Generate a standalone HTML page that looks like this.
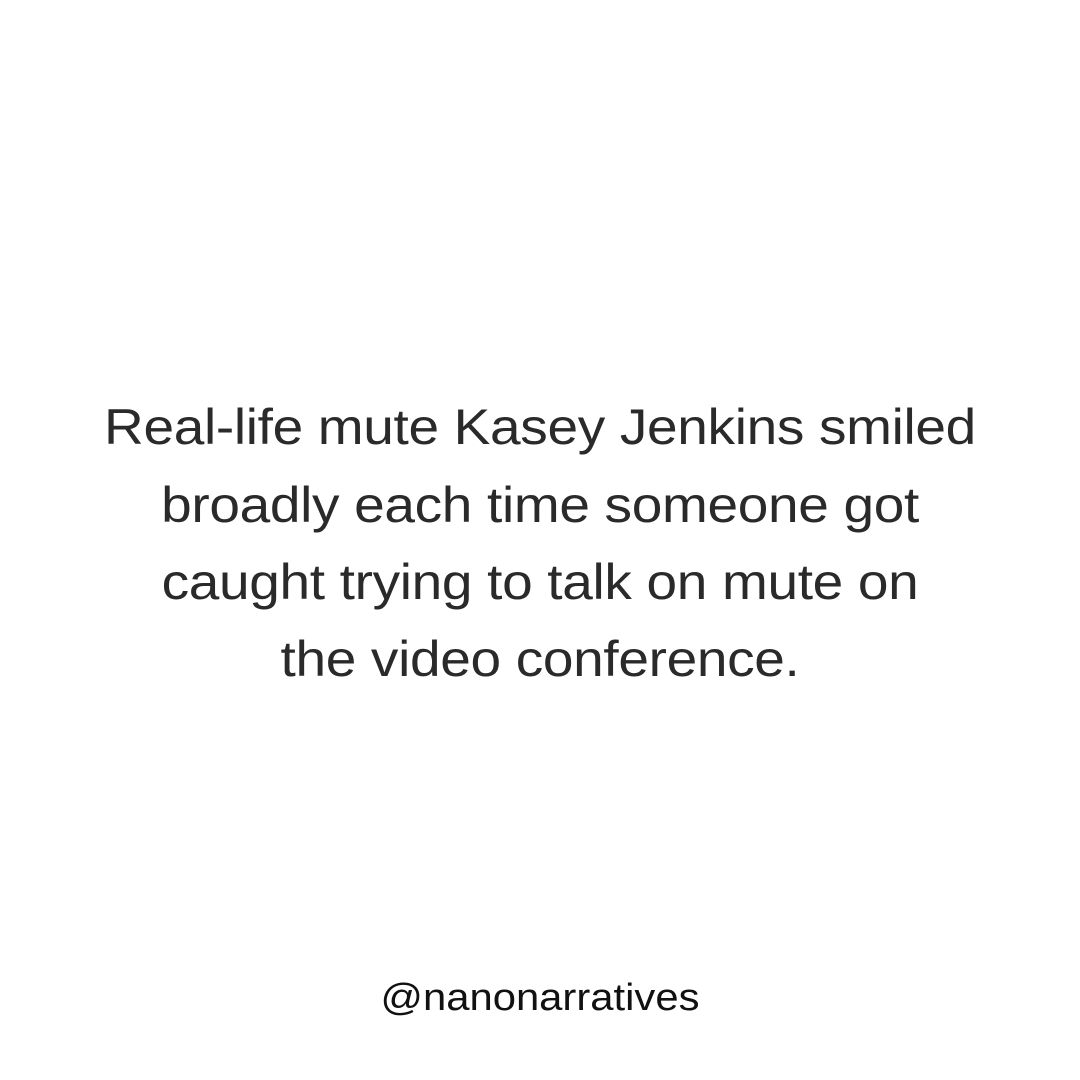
<!DOCTYPE html>
<html><head><meta charset="utf-8"><style>
html,body{margin:0;padding:0;background:#fff;}
body{width:1080px;height:1080px;position:relative;overflow:hidden;font-family:"Liberation Sans",sans-serif;}
.l{position:absolute;left:0;width:1080px;text-align:center;font-size:50px;color:#2a2a2a;line-height:60px;white-space:nowrap;letter-spacing:-0.3px;transform:scaleX(1.1);transform-origin:540px 0;}
.h{position:absolute;left:0;width:1080px;text-align:center;font-size:38px;color:#111;line-height:44px;top:976px;transform:scaleX(1.1);transform-origin:540px 0;}
</style></head><body>
<div class="l" style="top:397px">Real-life mute Kasey Jenkins smiled</div>
<div class="l" style="top:475px">broadly each time someone got</div>
<div class="l" style="top:552px">caught trying to talk on mute on</div>
<div class="l" style="top:629px">the video conference.</div>
<div class="h">@nanonarratives</div>
</body></html>
